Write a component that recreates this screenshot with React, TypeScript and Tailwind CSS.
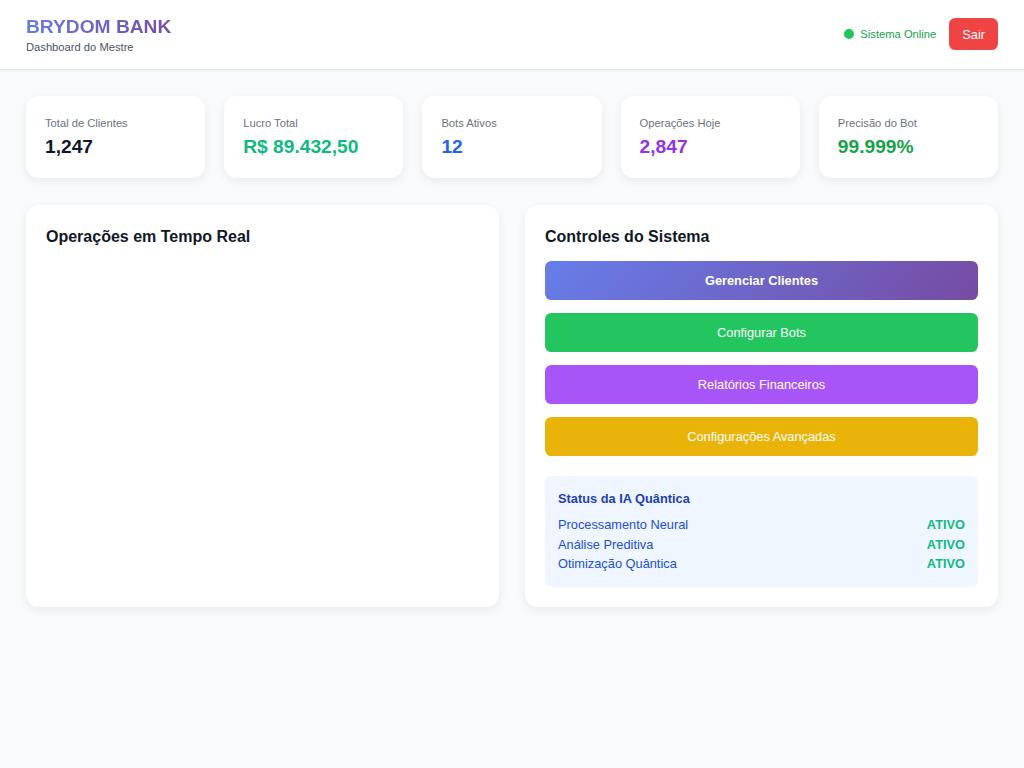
// Reference reads as an 80%-zoomed page, so sizes are scaled Tailwind values.
const stats = [
  { label: "Total de Clientes", value: "1,247", color: "text-[#111827]" },
  { label: "Lucro Total", value: "R$ 89.432,50", color: "text-[#10b981]" },
  { label: "Bots Ativos", value: "12", color: "text-[#2563eb]" },
  { label: "Operações Hoje", value: "2,847", color: "text-[#9333ea]" },
  { label: "Precisão do Bot", value: "99.999%", color: "text-[#16a34a]" },
];

const modules = ["Processamento Neural", "Análise Preditiva", "Otimização Quântica"];

function StatCard({ label, value, color }: { label: string; value: string; color: string }) {
  return (
    <div className="rounded-[13px] bg-white p-[19px] shadow-[0_3px_10px_rgba(0,0,0,0.07)]">
      <p className="text-[11.2px] leading-[16px] text-[#6b7280]">{label}</p>
      <p className={`mt-[3px] text-[19.2px] font-bold leading-[25.6px] ${color}`}>{value}</p>
    </div>
  );
}

export default function App() {
  return (
    <div className="min-h-screen bg-[#f9fafb] font-['Liberation_Sans',Arial,sans-serif]">
      <header className="flex items-center justify-between border-b border-[#e5e7eb] bg-white px-[26px] py-[13.5px] shadow-[0_1px_2px_rgba(0,0,0,0.05)]">
        <div>
          <h1 className="bg-[linear-gradient(135deg,#667eea_0%,#764ba2_100%)] bg-clip-text text-[19.2px] font-bold leading-[25.6px] text-transparent">
            BRYDOM BANK
          </h1>
          <p className="text-[11.2px] leading-[16px] text-[#4b5563]">Dashboard do Mestre</p>
        </div>
        <div className="flex items-center gap-[13px]">
          <div className="flex items-center gap-[6px]">
            <span className="h-[10px] w-[10px] rounded-full bg-[#22c55e]" />
            <span className="text-[11.2px] leading-[16px] text-[#16a34a]">Sistema Online</span>
          </div>
          <button className="rounded-[6.4px] bg-[#ef4444] px-[13px] py-[6.4px] text-[12.8px] leading-[19.2px] text-white">
            Sair
          </button>
        </div>
      </header>

      <main className="px-[26px] pt-[26px] pb-[26px]">
        <div className="grid grid-cols-5 gap-[19px]">
          {stats.map((s) => (
            <StatCard key={s.label} {...s} />
          ))}
        </div>

        <div className="mt-[27px] grid grid-cols-2 gap-[26px]">
          <section className="rounded-[13px] bg-white px-[20px] pt-[21px] pb-[20px] shadow-[0_3px_10px_rgba(0,0,0,0.07)]">
            <h2 className="text-[16px] font-bold leading-[22.4px] text-[#111827]">Operações em Tempo Real</h2>
          </section>

          <section className="rounded-[13px] bg-white px-[20px] pt-[21px] pb-[20px] shadow-[0_3px_10px_rgba(0,0,0,0.07)]">
            <h2 className="mb-[12px] text-[16px] font-bold leading-[22.4px] text-[#111827]">Controles do Sistema</h2>
            <div className="flex flex-col gap-[13px]">
              <button className="w-full rounded-[6.4px] bg-[linear-gradient(135deg,#667eea_0%,#764ba2_100%)] py-[10px] text-[12.8px] font-bold leading-[19.2px] text-white">
                Gerenciar Clientes
              </button>
              <button className="w-full rounded-[6.4px] bg-[#22c55e] py-[10px] text-[12.8px] leading-[19.2px] text-white">
                Configurar Bots
              </button>
              <button className="w-full rounded-[6.4px] bg-[#a855f7] py-[10px] text-[12.8px] leading-[19.2px] text-white">
                Relatórios Financeiros
              </button>
              <button className="w-full rounded-[6.4px] bg-[#eab308] py-[10px] text-[12.8px] leading-[19.2px] text-white">
                Configurações Avançadas
              </button>
            </div>

            <div className="mt-[20px] rounded-[6.4px] bg-[#eff6ff] p-[13px]">
              <h3 className="mb-[6.4px] text-[12.8px] font-bold leading-[19.2px] text-[#1e40af]">Status da IA Quântica</h3>
              {modules.map((m) => (
                <div key={m} className="flex justify-between text-[12.8px] leading-[19.6px]">
                  <span className="text-[#1d4ed8]">{m}</span>
                  <span className="font-bold text-[#10b981]">ATIVO</span>
                </div>
              ))}
            </div>
          </section>
        </div>
      </main>
    </div>
  );
}
